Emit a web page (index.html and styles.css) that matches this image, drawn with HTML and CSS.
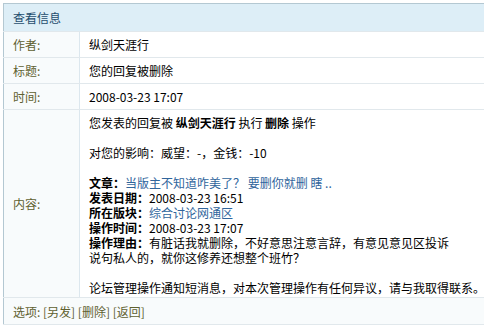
FILE: index.html
```html
<!DOCTYPE html>
<html lang="zh-CN">
<head>
    <meta charset="UTF-8">
    <title>查看信息</title>
    <link rel="stylesheet" href="styles.css">
</head>
<body>

    <table class="msg-table">
        <tr>
            <th colspan="2" class="msg-head">查看信息</th>
        </tr>
        <tr>
            <td class="label">作者:</td>
            <td class="value">纵剑天涯行</td>
        </tr>
        <tr>
            <td class="label">标题:</td>
            <td class="value">您的回复被删除</td>
        </tr>
        <tr>
            <td class="label">时间:</td>
            <td class="value">2008-03-23 17:07</td>
        </tr>
        <tr>
            <td class="label">内容:</td>
            <td class="value content">
                您发表的回复被 <b>纵剑天涯行</b> 执行 <b>删除</b> 操作<br><br>
                对您的影响：威望：-，金钱：-10<br><br>
                <b>文章：</b><a href="#">当版主不知道咋美了？ 要删你就删 瞎 ..</a><br>
                <b>发表日期：</b>2008-03-23 16:51<br>
                <b>所在版块：</b><a href="#">综合讨论网通区</a><br>
                <b>操作时间：</b>2008-03-23 17:07<br>
                <b>操作理由：</b>有脏话我就删除，不好意思注意言辞，有意见意见区投诉<br>
                说句私人的，就你这修养还想整个班竹？<br><br>
                论坛管理操作通知短消息，对本次管理操作有任何异议，请与我取得联系。
            </td>
        </tr>
        <tr>
            <td colspan="2" class="options">
                选项: <a href="#">[另发]</a> <a href="#">[删除]</a> <a href="#">[返回]</a>
            </td>
        </tr>
    </table>

</body>
</html>
```

FILE: styles.css
```css
body {
    margin: 0;
    padding: 3px 0 0 3px;
    background-color: #fff;
    font-family: "Noto Sans CJK SC", "Liberation Sans", sans-serif;
    font-size: 12px;
    color: #000;
    overflow: hidden;
}

.msg-table {
    width: 500px;
    border-collapse: collapse;
    border-top: 1px solid #b4c8d2;
    border-left: 1px solid #b4c8d2;
}

.msg-table td,
.msg-table th {
    padding: 0;
    line-height: 15px;
    border-bottom: 1px solid #e1e8ec;
}

.msg-head {
    height: 27px;
    padding-left: 9px !important;
    text-align: left;
    font-weight: normal;
    color: #1f4d6e;
    background-color: #ddeef7;
    border-bottom: 1px solid #e1e8ec;
}

.label {
    width: 66px;
    height: 25px;
    padding-left: 9px !important;
    color: #5f6130;
    background-color: #f8fbfc;
    border-right: 1px solid #dce7ee;
}

.value {
    padding-left: 9px !important;
}

.content {
    padding-top: 5px !important;
    padding-bottom: 2px !important;
}

.content b {
    font-weight: bold;
}

.content a {
    color: #30659c;
    text-decoration: none;
}

.options {
    height: 26px;
    padding-left: 9px !important;
    color: #5f6130;
    background-color: #f8fbfc;
}

.options a {
    color: #5f6130;
    text-decoration: none;
}
```
